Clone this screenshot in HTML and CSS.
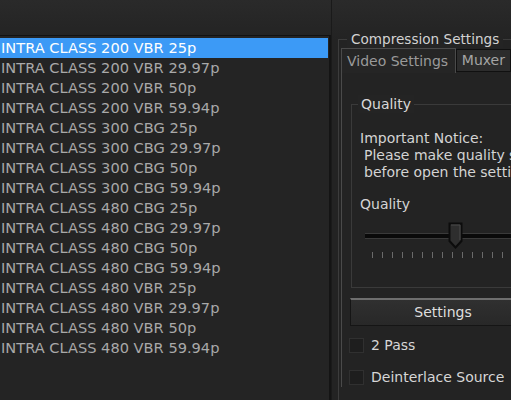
FILE: index.html
```html
<!DOCTYPE html>
<html>
<head>
<meta charset="utf-8">
<link rel="stylesheet" href="styles.css">
</head>
<body>
<div class="app">
  <div class="left">
    <ul class="list">
      <li class="sel">INTRA CLASS 200 VBR 25p</li>
      <li>INTRA CLASS 200 VBR 29.97p</li>
      <li>INTRA CLASS 200 VBR 50p</li>
      <li>INTRA CLASS 200 VBR 59.94p</li>
      <li>INTRA CLASS 300 CBG 25p</li>
      <li>INTRA CLASS 300 CBG 29.97p</li>
      <li>INTRA CLASS 300 CBG 50p</li>
      <li>INTRA CLASS 300 CBG 59.94p</li>
      <li>INTRA CLASS 480 CBG 25p</li>
      <li>INTRA CLASS 480 CBG 29.97p</li>
      <li>INTRA CLASS 480 CBG 50p</li>
      <li>INTRA CLASS 480 CBG 59.94p</li>
      <li>INTRA CLASS 480 VBR 25p</li>
      <li>INTRA CLASS 480 VBR 29.97p</li>
      <li>INTRA CLASS 480 VBR 50p</li>
      <li>INTRA CLASS 480 VBR 59.94p</li>
    </ul>
  </div>
  <div class="right">
    <div class="group">
      <div class="legend">Compression Settings</div>
      <div class="tabs">
        <div class="tab active">Video Settings</div>
        <div class="tab">Muxer</div>
        <div class="tab-rest"></div>
      </div>
      <div class="pane">
        <div class="quality">
          <div class="qlegend">Quality</div>
          <div class="notice">Important Notice:</div>
          <div class="notice-body">Please make quality settings<br>before open the settings</div>
          <div class="qlabel">Quality</div>
          <div class="slider">
            <div class="track"></div>
            <svg class="thumb" width="15" height="27" viewBox="0 0 15 27">
              <path d="M1.5 1.5 H13.5 V19 L7.5 25.5 L1.5 19 Z" fill="#2e2e2e" stroke="#0c0c0c" stroke-width="2"/>
              <path d="M3 3 H12 V18" fill="none" stroke="#4a4a4a" stroke-width="1"/>
            </svg>
          </div>
          <div class="ticks">
            <i></i><i></i><i></i><i></i><i></i><i></i><i></i><i></i><i></i><i></i><i></i><i></i><i></i><i></i>
          </div>
        </div>
        <div class="btn">Settings</div>
        <label class="check"><span class="box"></span>2 Pass</label>
        <label class="check"><span class="box"></span>Deinterlace Source</label>
      </div>
    </div>
  </div>
</div>
</body>
</html>
```
FILE: styles.css
```css
html, body {
  margin: 0;
  padding: 0;
  background: #232323;
  overflow: hidden;
}
body {
  width: 511px;
  height: 400px;
  font-family: "DejaVu Sans", "Liberation Sans", sans-serif;
  font-size: 14px;
}
.app {
  display: flex;
  height: 400px;
  overflow: hidden;
  background: linear-gradient(#2a2a2a, #232323 40px);
}
.left {
  width: 331px;
  flex: none;
  padding-top: 35px;
}
.list {
  list-style: none;
  margin: 0;
  padding: 2px 0 0 0;
  height: 365px;
  box-sizing: border-box;
  border-top: 1px solid #121212;
  border-right: 2px solid #141414;
  background: #242424;
  font-size: 14.6px;
}
.list li {
  height: 20px;
  line-height: 20px;
  color: #a9a9a9;
  padding-left: 1px;
  white-space: nowrap;
}
.list li.sel {
  background: #3c9af6;
  color: #ffffff;
  margin-right: 1px;
}
.right {
  flex: 1;
  min-width: 0;
  overflow: hidden;
  padding-left: 6px;
  padding-top: 30px;
  border-left: 1px solid #1a1a1a;
}
.group {
  position: relative;
  border-top: 1px solid #3c3c3c;
  border-left: 1px solid #3c3c3c;
  margin-top: 9px;
  height: 360px;
}
.legend {
  position: absolute;
  top: -10px;
  left: 8px;
  background: #242424;
  padding: 0 4px 0 4px;
  color: #d2d2d2;
  line-height: 18px;
  font-size: 13.6px;
}
.tabs {
  display: flex;
  margin-top: 8px;
  margin-left: 2px;
  align-items: flex-end;
}
.tab {
  color: #9a9a9a;
  line-height: 22px;
  padding: 0 4px;
}
.tab.active {
  border: 1px solid #4a4a4a;
  border-bottom: none;
  background: #252525;
  height: 25px;
  box-sizing: border-box;
  line-height: 24px;
  width: 118px;
  padding-left: 5px;
}
.tab:not(.active) {
  background: #2c2c2c;
  border: 1px solid #101010;
  height: 23px;
  box-sizing: border-box;
  margin-bottom: 1px;
  color: #a4a4a4;
  padding: 0 5px;
  line-height: 21px;
}
.tab-rest {
  flex: 1;
  border-bottom: 1px solid #4a4a4a;
}
.pane {
  border-left: 1px solid #4a4a4a;
  margin-left: 2px;
  padding: 31px 0 0 9px;
}
.quality {
  position: relative;
  border: 1px solid #3a3a3a;
  border-right: none;
  height: 184px;
  padding: 25px 0 0 8px;
  box-sizing: border-box;
}
.qlegend {
  position: absolute;
  top: -10px;
  left: 6px;
  padding: 0 3px;
  background: #242424;
  color: #d8d8d8;
  line-height: 18px;
}
.notice {
  color: #d4d4d4;
  line-height: 17px;
  white-space: nowrap;
}
.notice-body {
  color: #d4d4d4;
  line-height: 17px;
  padding-left: 4px;
  white-space: nowrap;
}
.qlabel {
  color: #d4d4d4;
  margin-top: 14px;
  line-height: 18px;
}
.slider {
  position: relative;
  height: 30px;
  margin-top: 10px;
  margin-left: 5px;
}
.track {
  position: absolute;
  left: 0;
  right: 0;
  top: 10px;
  height: 4px;
  background: #0a0a0a;
  border-top: 1px solid #3a3a3a;
  border-bottom: 1px solid #3a3a3a;
}
.thumb {
  position: absolute;
  left: 83px;
  top: -1px;
}
.ticks {
  display: flex;
  gap: 9px;
  margin-left: 12px;
  margin-top: -1px;
}
.ticks i {
  display: block;
  flex: none;
  width: 1px;
  height: 6px;
  background: #6a6a6a;
}
.btn {
  margin-top: 10px;
  margin-left: -1px;
  height: 28px;
  box-sizing: border-box;
  border: 1px solid #151515;
  border-top: 2px solid #6e6e6e;
  border-right: none;
  background: linear-gradient(#303030, #282828);
  color: #dedede;
  text-align: center;
  line-height: 24px;
  padding-left: 24px;
}
.check {
  display: flex;
  align-items: center;
  gap: 7px;
  color: #d6d6d6;
  height: 20px;
  margin-left: -2px;
}
.check:first-of-type {
  margin-top: 9px;
}
.check + .check {
  margin-top: 12px;
}
.box {
  width: 15px;
  height: 15px;
  background: #1e1e1e;
  border: 1px solid #303030;
  display: block;
  box-sizing: border-box;
}
```
